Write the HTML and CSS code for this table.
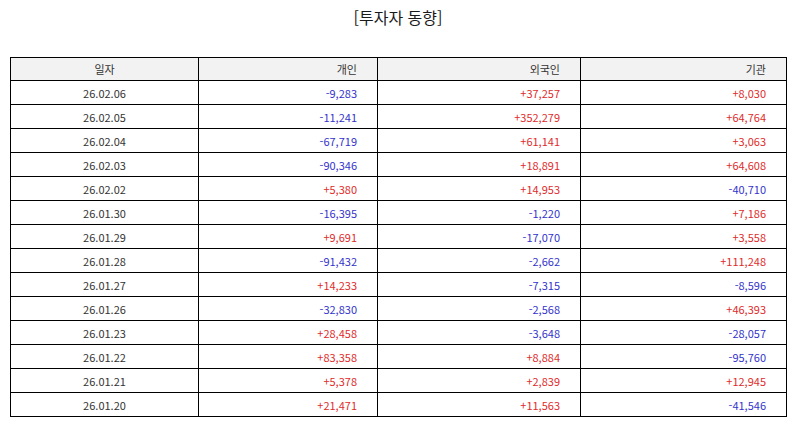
FILE: index.html
```html
<!DOCTYPE html>
<html lang="ko">
<head>
<meta charset="utf-8">
<link rel="stylesheet" href="styles.css">
</head>
<body>
<div class="page">
  <h1 class="title">[투자자 동향]</h1>
  <table class="grid">
    <colgroup>
      <col class="c-date"><col class="c-ind"><col class="c-for"><col class="c-inst">
    </colgroup>
    <thead>
      <tr><th class="center">일자</th><th>개인</th><th>외국인</th><th>기관</th></tr>
    </thead>
    <tbody>
      <tr><td class="center">26.02.06</td><td class="neg">-9,283</td><td class="pos">+37,257</td><td class="pos">+8,030</td></tr>
      <tr><td class="center">26.02.05</td><td class="neg">-11,241</td><td class="pos">+352,279</td><td class="pos">+64,764</td></tr>
      <tr><td class="center">26.02.04</td><td class="neg">-67,719</td><td class="pos">+61,141</td><td class="pos">+3,063</td></tr>
      <tr><td class="center">26.02.03</td><td class="neg">-90,346</td><td class="pos">+18,891</td><td class="pos">+64,608</td></tr>
      <tr><td class="center">26.02.02</td><td class="pos">+5,380</td><td class="pos">+14,953</td><td class="neg">-40,710</td></tr>
      <tr><td class="center">26.01.30</td><td class="neg">-16,395</td><td class="neg">-1,220</td><td class="pos">+7,186</td></tr>
      <tr><td class="center">26.01.29</td><td class="pos">+9,691</td><td class="neg">-17,070</td><td class="pos">+3,558</td></tr>
      <tr><td class="center">26.01.28</td><td class="neg">-91,432</td><td class="neg">-2,662</td><td class="pos">+111,248</td></tr>
      <tr><td class="center">26.01.27</td><td class="pos">+14,233</td><td class="neg">-7,315</td><td class="neg">-8,596</td></tr>
      <tr><td class="center">26.01.26</td><td class="neg">-32,830</td><td class="neg">-2,568</td><td class="pos">+46,393</td></tr>
      <tr><td class="center">26.01.23</td><td class="pos">+28,458</td><td class="neg">-3,648</td><td class="neg">-28,057</td></tr>
      <tr><td class="center">26.01.22</td><td class="pos">+83,358</td><td class="pos">+8,884</td><td class="neg">-95,760</td></tr>
      <tr><td class="center">26.01.21</td><td class="pos">+5,378</td><td class="pos">+2,839</td><td class="pos">+12,945</td></tr>
      <tr><td class="center">26.01.20</td><td class="pos">+21,471</td><td class="pos">+11,563</td><td class="neg">-41,546</td></tr>
    </tbody>
  </table>
</div>
</body>
</html>
```

FILE: styles.css
```css
html, body {
  margin: 0;
  padding: 0;
  background: #ffffff;
}
body {
  font-family: "Noto Sans CJK KR", "Noto Sans", sans-serif;
  color: #333333;
}
.page {
  width: 795px;
  padding: 0 9px 0 10px;
  box-sizing: border-box;
}
.title {
  margin: 0;
  padding-top: 6px;
  height: 57px;
  box-sizing: border-box;
  text-align: center;
  font-size: 16px;
  font-weight: normal;
  line-height: 22px;
  color: #1a1a1a;
}
.grid {
  width: 776px;
  border-collapse: collapse;
  table-layout: fixed;
  font-size: 11px;
}
.c-date { width: 188px; }
.c-ind { width: 179px; }
.c-for { width: 203px; }
.c-inst { width: 206px; }
.grid th, .grid td {
  border: 1.5px solid #000000;
  padding: 0 20px 0 4px;
  text-align: right;
  font-weight: normal;
  white-space: nowrap;
}
.grid thead tr { height: 23px; }
.grid tbody tr { height: 24px; }
.grid th {
  background: #f2f2f2;
  color: #333333;
}
.grid .center {
  text-align: center;
  padding: 0;
}
.neg { color: #3333cc; }
.pos { color: #e02b2b; }
```
